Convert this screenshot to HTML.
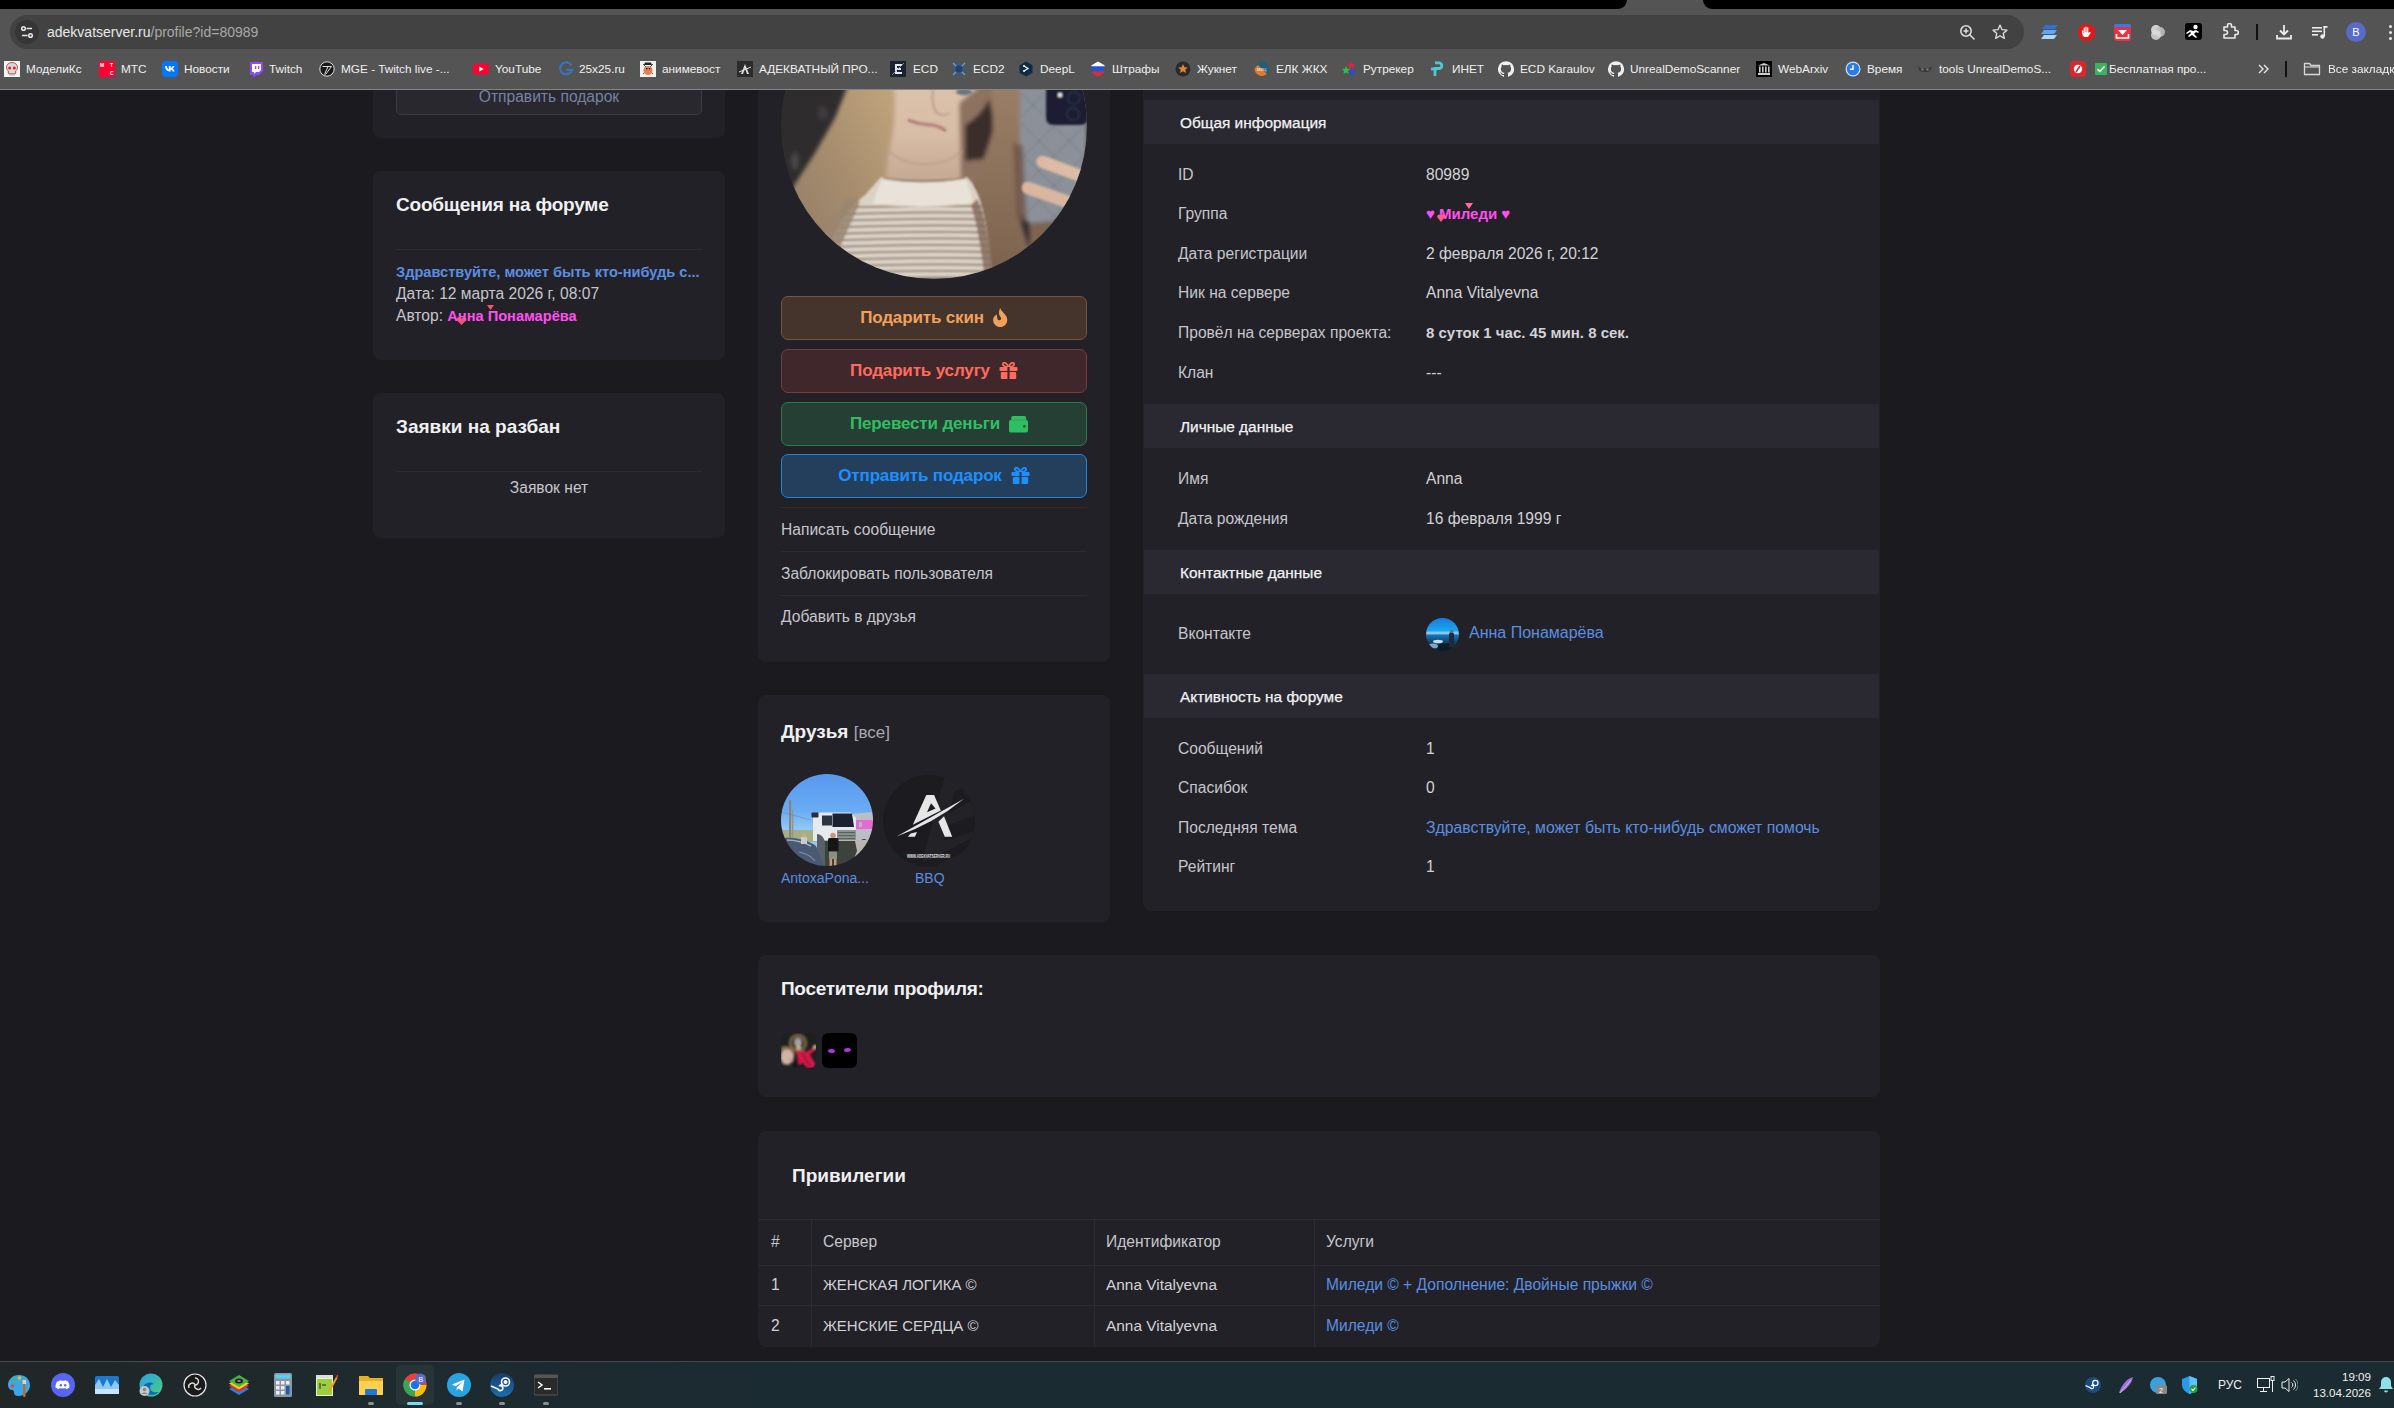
<!DOCTYPE html>
<html><head><meta charset="utf-8">
<style>
*{margin:0;padding:0;box-sizing:border-box}
html,body{width:2394px;height:1408px;overflow:hidden;background:#1b1a1f;font-family:"Liberation Sans",sans-serif}
.a{position:absolute}
.t{position:absolute;white-space:nowrap;line-height:20px}
.card{position:absolute;background:#222127;border-radius:8px}
.hr{position:absolute;height:1px;background:#2d2c33}
.lbl{color:#c6c6cc;font-size:15.6px}
.val{color:#d2d2d6;font-size:15.6px}
.ttl{color:#f0f0f2;font-size:19px;font-weight:700}
.link{color:#5b8ee0}
.pink{color:#ff4ff0;font-weight:700}
.sh{position:absolute;left:1144px;width:735px;height:44px;background:#2a2932}
.sht{position:absolute;left:36px;top:13px;line-height:20px;font-size:15.4px;color:#f2f2f4;-webkit-text-stroke:0.25px #f2f2f4;white-space:nowrap}
.btn{position:absolute;left:781px;width:306px;height:44px;border-radius:7px;border:1px solid}
.btxt{position:absolute;left:0;right:0;top:0;bottom:0;display:flex;align-items:center;justify-content:center;font-weight:700;font-size:17px;letter-spacing:-0.15px}
.bk{position:absolute;top:61px;height:16px;width:16px}
.bkt{position:absolute;top:62px;line-height:14px;font-size:11.8px;color:#f0f0f0;white-space:nowrap}
.ti{position:absolute;top:1373px;width:24px;height:24px}
</style></head><body>

<!-- ===== Page content ===== -->
<!-- Left column -->
<div class="card" style="left:373px;top:40px;width:352px;height:98px"></div>
<div class="a" style="left:396px;top:60px;width:306px;height:55px;border:1px solid #353c4a;border-radius:5px;background:#29282f"></div>
<div class="t" style="left:396px;width:306px;text-align:center;top:87px;font-size:15.6px;color:#7683a4">Отправить подарок</div>

<div class="card" style="left:373px;top:171px;width:352px;height:189px"></div>
<div class="t ttl" style="left:396px;top:195px;letter-spacing:-0.2px">Сообщения на форуме</div>
<div class="hr" style="left:396px;top:249px;width:306px"></div>
<div class="t link" style="left:396px;top:262px;font-size:14.6px;font-weight:700">Здравствуйте, может быть кто-нибудь с...</div>
<div class="t lbl" style="left:396px;top:284px">Дата: 12 марта 2026 г, 08:07</div>
<div class="t lbl" style="left:396px;top:306px">Автор: <span class="pink" style="font-size:14.6px">Анна Понамарёва</span></div>

<div class="card" style="left:373px;top:393px;width:352px;height:145px"></div>
<div class="t ttl" style="left:396px;top:417px">Заявки на разбан</div>
<div class="hr" style="left:396px;top:471px;width:306px"></div>
<div class="t lbl" style="left:396px;width:306px;text-align:center;top:478px">Заявок нет</div>

<!-- Middle column -->
<div class="card" style="left:758px;top:40px;width:352px;height:622px"></div>
<svg class="a" style="left:781px;top:-27px" width="306" height="306" viewBox="0 0 306 306">
 <defs>
  <clipPath id="av"><circle cx="153" cy="153" r="153"/></clipPath>
  <clipPath id="sw"><path d="M100 204 C130 210 165 210 186 204 C198 215 206 240 212 306 L40 306 C46 270 60 240 84 222z"/></clipPath>
  <filter id="bl" x="-10%" y="-10%" width="120%" height="120%"><feGaussianBlur stdDeviation="2.2"/></filter>
  <filter id="bl2" x="-10%" y="-10%" width="120%" height="120%"><feGaussianBlur stdDeviation="1"/></filter>
  <linearGradient id="hl" x1="1" y1="0" x2="0" y2="1"><stop offset="0" stop-color="#c6aa80"/><stop offset=".5" stop-color="#a88e6e"/><stop offset="1" stop-color="#8c7868"/></linearGradient>
  <linearGradient id="hr" x1="0" y1="0" x2="0" y2="1"><stop offset="0" stop-color="#9c8068"/><stop offset="1" stop-color="#7c624e"/></linearGradient>
  <linearGradient id="fc" x1="0" y1="0" x2="0" y2="1"><stop offset="0" stop-color="#ddc2ac"/><stop offset=".55" stop-color="#d8bda6"/><stop offset="1" stop-color="#c4a892"/></linearGradient>
 </defs>
 <g clip-path="url(#av)">
  <rect width="306" height="306" fill="#2f2c2e"/>
  <g filter="url(#bl)">
   <ellipse cx="14" cy="188" rx="4" ry="9" fill="#5a5a5c" opacity=".6"/>
   <ellipse cx="42" cy="140" rx="5" ry="7" fill="#48464a" opacity=".6"/>
   <path d="M72 100 L128 100 L120 170 L108 205 L90 222 L72 250 L58 306 L22 306 L8 250 L12 214 L34 180 L54 145z" fill="url(#hl)"/>
   <path d="M112 100 L214 100 C213 130 204 160 182 178 L182 210 L104 210 L108 180 C113 160 116 135 112 100z" fill="url(#fc)"/>
   <path d="M178 130 L214 100 L222 150 L204 214 L180 214z" fill="#8e7260"/><path d="M184 152 C194 146 202 138 208 126 L214 150 L204 186 L184 188z" fill="#3a2e2c"/>
   <path d="M211 100 L240 100 L240 250 L258 306 L195 306 L186 250 L196 205 L212 160z" fill="url(#hr)"/>
   <path d="M239 100 L306 100 L306 248 L248 250 L239 240z" fill="#8c9199"/>
   <path d="M232 170 L242 172 L246 250 L236 246z" fill="#6a4e40" opacity=".7"/>
   <path d="M248 250 L300 250 L280 306 L250 306z" fill="#7e6450"/>
  </g>
  <g filter="url(#bl2)">
   <g stroke="#6e7480" stroke-width="1" opacity=".7">
    <path d="M240 120 L306 186M240 150 L306 216M240 180 L300 240M240 210 L276 246M262 100 L306 144"/>
    <path d="M306 120 L240 186M306 150 L240 216M306 180 L246 240M306 210 L270 246M284 100 L240 144"/>
   </g>
   <rect x="265" y="100" width="42" height="52" rx="7" fill="#1b1f30"/>
   <circle cx="279" cy="122" r="2.2" fill="#f0f0f0"/>
   <circle cx="293" cy="125" r="6" fill="none" stroke="#2e3448" stroke-width="1.5"/>
   <circle cx="292" cy="141" r="6" fill="none" stroke="#2e3448" stroke-width="1.5"/>
   <path d="M262 189 L300 203" stroke="#dcbca6" stroke-width="12.5" stroke-linecap="round"/>
   <path d="M247 215 L290 230" stroke="#d8b6a0" stroke-width="12.5" stroke-linecap="round"/>
   <circle cx="260" cy="188" r="5" fill="#e4b0a4" opacity=".6"/>
   <circle cx="246" cy="214" r="5" fill="#e4b0a4" opacity=".6"/>
   <path d="M100 204 C130 210 165 210 186 204 C198 215 206 240 212 306 L40 306 C46 270 60 240 84 222z" fill="#dcd1c5"/>
   <g clip-path="url(#sw)"><g stroke="#8a7c6e" stroke-width="1.9" fill="none"><path d="M40 235.5 Q130 231.5 215 233.5"/><path d="M40 242.0 Q130 238.0 215 240.0"/><path d="M40 248.5 Q130 244.5 215 246.5"/><path d="M40 255.0 Q130 251.0 215 253.0"/><path d="M40 261.5 Q130 257.5 215 259.5"/><path d="M40 268.0 Q130 264.0 215 266.0"/><path d="M40 274.5 Q130 270.5 215 272.5"/><path d="M40 281.0 Q130 277.0 215 279.0"/><path d="M40 287.5 Q130 283.5 215 285.5"/><path d="M40 294.0 Q130 290.0 215 292.0"/><path d="M40 300.5 Q130 296.5 215 298.5"/><path d="M40 307.0 Q130 303.0 215 305.0"/></g></g>
   <path d="M102 205 Q140 212 184 205 Q190 218 192 230 Q145 237 92 231 Q96 215 102 205z" fill="#e8e2d8"/>
   <path d="M102 205 Q140 212 184 205" stroke="#8a7a6c" stroke-width="1.3" fill="none"/>
   <path d="M66 226 C74 224 80 226 78 232 C70 250 58 275 46 306 L26 306 C36 275 50 245 66 226z" fill="#9a8670" opacity=".85"/>
   <path d="M196 226 C204 240 208 270 214 306 L204 306 C200 275 196 250 190 232z" fill="#82685a" opacity=".8"/>
   <path d="M152 117 Q150 133 156 140 Q162 144 169 140" stroke="#b4948a" stroke-width="2" fill="none" opacity=".7"/>
   <path d="M127 147 Q140 152 152 152 Q160 154 165 158" stroke="#b07f7a" stroke-width="3" fill="none"/>
   <ellipse cx="183" cy="119" rx="8" ry="3.2" fill="#6c7480"/>
   <path d="M108 178 C125 195 160 196 182 178" stroke="#b89a86" stroke-width="2" fill="none" opacity=".6"/>
  </g>
 </g>
</svg>

<div class="btn" style="top:296px;background:#45342c;border-color:#7b5538"><div class="btxt" style="color:#f2a15a">Подарить скин<svg width="15" height="19" viewBox="0 0 15 19" style="margin-left:9px;margin-top:-2px"><path d="M7.3 0C7.6 3.2 14.3 6.6 14.3 12A7.1 7.1 0 0 1 0.1 12C0.1 9.6 1.6 7.6 3.7 6.6L4.4 10.8C4.7 12.6 7.4 12.9 8 11.2C8.6 9.6 6.4 8.4 6.1 6.3C5.8 4.3 6.2 1.8 7.3 0z" fill="#f2a15a"/></svg></div></div>
<div class="btn" style="top:349px;background:#40272b;border-color:#7a3b3b"><div class="btxt" style="color:#ff6b5e">Подарить услугу<svg width="19" height="17" viewBox="0 0 19 17" style="margin-left:9px;margin-top:-2px"><path d="M9.5 5C8 1 5.5 0 4.3 1.2 3 2.5 4.5 5 9.5 5zM9.5 5c1.5-4 4-5 5.2-3.8C16 2.5 14.5 5 9.5 5z" stroke="#ff6b5e" stroke-width="1.8" fill="none"/><rect x="0.5" y="5" width="18" height="4" rx="1" fill="#ff6b5e"/><rect x="1.8" y="10" width="15.4" height="7" rx="1" fill="#ff6b5e"/><rect x="8.4" y="5" width="2.2" height="12" fill="#40272b"/></svg></div></div>
<div class="btn" style="top:402px;background:#263f35;border-color:#2f7a4c"><div class="btxt" style="color:#2fbf62">Перевести деньги<svg width="19" height="17" viewBox="0 0 19 17" style="margin-left:9px;margin-right:-10px"><rect x="2.2" y="0" width="15" height="5.5" rx="2" fill="#2fbf62"/><rect x="0" y="3.8" width="19" height="12.8" rx="2.6" fill="#2fbf62"/><rect x="2.2" y="3.6" width="15" height="1" fill="#2a6a48" opacity=".35"/><rect x="14.3" y="9.2" width="2.2" height="2.2" fill="#263f35"/></svg></div></div>
<div class="btn" style="top:454px;background:#243f5c;border-color:#1f86e0"><div class="btxt" style="color:#1c90ff">Отправить подарок<svg width="19" height="17" viewBox="0 0 19 17" style="margin-left:9px;margin-top:-2px"><path d="M9.5 5C8 1 5.5 0 4.3 1.2 3 2.5 4.5 5 9.5 5zM9.5 5c1.5-4 4-5 5.2-3.8C16 2.5 14.5 5 9.5 5z" stroke="#1c90ff" stroke-width="1.8" fill="none"/><rect x="0.5" y="5" width="18" height="4" rx="1" fill="#1c90ff"/><rect x="1.8" y="10" width="15.4" height="7" rx="1" fill="#1c90ff"/><rect x="8.4" y="5" width="2.2" height="12" fill="#243f5c"/></svg></div></div>

<div class="hr" style="left:781px;top:507px;width:306px"></div>
<div class="t lbl" style="left:781px;top:520px">Написать сообщение</div>
<div class="hr" style="left:781px;top:551px;width:306px"></div>
<div class="t lbl" style="left:781px;top:564px">Заблокировать пользователя</div>
<div class="hr" style="left:781px;top:595px;width:306px"></div>
<div class="t lbl" style="left:781px;top:607px">Добавить в друзья</div>

<!-- Friends -->
<div class="card" style="left:758px;top:695px;width:352px;height:227px"></div>
<div class="t ttl" style="left:781px;top:722px">Друзья <span style="font-weight:400;color:#a9a9b2;font-size:17px">[все]</span></div>
<svg class="a" style="left:781px;top:774px" width="92" height="92" viewBox="0 0 92 92">
 <defs><clipPath id="f1"><circle cx="46" cy="46" r="46"/></clipPath><linearGradient id="sky" x1="0" y1="0" x2="0" y2="1"><stop offset="0" stop-color="#5898ee"/><stop offset=".4" stop-color="#6aacf4"/><stop offset=".6" stop-color="#94c8f6"/></linearGradient><filter id="fb"><feGaussianBlur stdDeviation="0.45"/></filter></defs>
 <g clip-path="url(#f1)" filter="url(#fb)">
  <rect width="92" height="92" fill="url(#sky)"/>
  <rect y="56" width="40" height="12" fill="#a6ae86"/>
  <rect x="8" y="26" width="2.2" height="42" fill="#8a8478"/><rect x="11" y="36" width="1.4" height="32" fill="#9a9488"/>
  <path d="M0 38L30 46" stroke="#6a7480" stroke-width=".4"/>
  <path d="M70 40L92 38V67H70z" fill="#bcbec6"/><rect x="73" y="46" width="19" height="9" rx="2" fill="#e66ad6"/><rect x="78" y="48" width="3" height="5" fill="#b8b8c0"/>
  <circle cx="83" cy="68.5" r="3.5" fill="#3a3c40"/>
  <path d="M32 40L40 38.5H70L75 44V67H32z" fill="#e6eaee"/>
  <path d="M51.5 39.5H71L73 53H51.5z" fill="#1c2230"/>
  <path d="M41 41.5H51V51.5H41z" fill="#2c3440"/>
  <rect x="30.5" y="38.5" width="7" height="5" rx="1" fill="#2a2e38"/>
  <rect x="56" y="56" width="19" height="11" fill="#8c9490"/><g fill="#5a625e"><rect x="57" y="58" width="17" height="1.2"/><rect x="57" y="61" width="17" height="1.2"/><rect x="57" y="64" width="17" height="1.2"/></g>
  <rect x="54" y="67" width="22" height="10" fill="#4c5450"/>
  <path d="M40 66h50v26H40z" fill="#b8b6ae"/><path d="M38 67h36l2 10-6 15H38z" fill="#3c423e"/>
  <path d="M36 60c4 0 8 4 8 10v22H36z" fill="#5a6068"/>
  <path d="M3 64c10-1 24 2 32 8l8 20H0z" fill="#4a5a72"/><path d="M6 66c8 0 16 2 24 6" stroke="#a0b0c8" stroke-width="1.4" fill="none"/><path d="M18 78c6 1 12 4 16 9" stroke="#8090a8" stroke-width="1.2" fill="none"/>
  <rect x="20" y="63" width="6" height="7" fill="#c8ccd0"/><circle cx="23" cy="61.5" r="2" fill="#c8a888"/>
  <circle cx="52" cy="61.5" r="2.8" fill="#c89878"/><rect x="47" y="64" width="10.5" height="13.5" rx="1.5" fill="#121212"/><rect x="48" y="77.5" width="8" height="7.5" fill="#8e9088"/><rect x="48.5" y="85" width="2.5" height="7" fill="#c89878"/><rect x="53" y="85" width="2.5" height="7" fill="#c89878"/>
 </g>
</svg>
<svg class="a" style="left:883px;top:775px" width="92" height="92" viewBox="0 0 92 92">
 <defs><clipPath id="f2"><circle cx="46" cy="46" r="46"/></clipPath><filter id="fb2"><feGaussianBlur stdDeviation="0.3"/></filter></defs>
 <g clip-path="url(#f2)">
  <rect width="92" height="92" fill="#1c1b20"/>
  <path d="M62 0L92 0L92 92L38 92z" fill="#232227"/>
  <path d="M72 16L92 8L92 24L66 38z" fill="#1c1b20"/>
  <path d="M66 50L92 40L92 56L60 66z" fill="#1c1b20"/>
  <path d="M30 92L92 62L92 72L50 92z" fill="#1c1b20"/>
  <g fill="#e6e6e6" filter="url(#fb2)">
   <path d="M43.3 19.9H51.1L57.8 35.5 29.8 49.7z"/>
   <path d="M13.5 61.4L81 23.8Q50 49 13.5 61.4z"/>
   <path d="M55.4 46.8L61 41.2 69.2 61.8H61.8z"/>
   <path d="M24.8 61.8H31.9L34 57.1 27.7 58.6z"/>
  </g>
  <path d="M48 28.2L44 37.2 52.5 33.5z" fill="#1c1b20"/>
  <text x="24" y="83.4" font-family="Liberation Sans" font-weight="700" font-size="5" fill="#e0e0e0" textLength="43" lengthAdjust="spacingAndGlyphs">WWW.ADEKVATSERVER.RU</text>
 </g>
</svg>
<div class="t link" style="left:781px;top:868px;font-size:14px">AntoxaPona...</div>
<div class="t link" style="left:915px;top:868px;font-size:14px">BBQ</div>

<!-- Right info card -->
<div class="card" style="left:1143px;top:40px;width:737px;height:871px"></div>
<div class="sh" style="top:100px"><div class="sht">Общая информация</div></div>
<div class="t lbl" style="left:1178px;top:165px">ID</div>
<div class="t val" style="left:1426px;top:165px">80989</div>
<div class="t lbl" style="left:1178px;top:204px">Группа</div>
<div class="t pink" style="left:1426px;top:204px;font-size:15px">♥ Миледи ♥</div>
<div class="t lbl" style="left:1178px;top:244px">Дата регистрации</div>
<div class="t val" style="left:1426px;top:244px">2 февраля 2026 г, 20:12</div>
<div class="t lbl" style="left:1178px;top:283px">Ник на сервере</div>
<div class="t val" style="left:1426px;top:283px">Anna Vitalyevna</div>
<div class="t lbl" style="left:1178px;top:323px">Провёл на серверах проекта:</div>
<div class="t val" style="left:1426px;top:323px;font-weight:700;font-size:15px">8 суток 1 час. 45 мин. 8 сек.</div>
<div class="t lbl" style="left:1178px;top:363px">Клан</div>
<div class="t val" style="left:1426px;top:363px">---</div>

<div class="sh" style="top:404px"><div class="sht">Личные данные</div></div>
<div class="t lbl" style="left:1178px;top:469px">Имя</div>
<div class="t val" style="left:1426px;top:469px">Anna</div>
<div class="t lbl" style="left:1178px;top:509px">Дата рождения</div>
<div class="t val" style="left:1426px;top:509px">16 февраля 1999 г</div>

<div class="sh" style="top:550px"><div class="sht">Контактные данные</div></div>
<div class="t lbl" style="left:1178px;top:624px">Вконтакте</div>
<svg class="a" style="left:1426px;top:618px" width="33" height="33" viewBox="0 0 33 33"><defs><clipPath id="vk"><circle cx="16.5" cy="16.5" r="16.5"/></clipPath><linearGradient id="vkg" x1="0" y1="0" x2="0" y2="1"><stop offset="0" stop-color="#1a7ada"/><stop offset=".38" stop-color="#18a6f0"/><stop offset=".46" stop-color="#a6d4f2"/><stop offset=".52" stop-color="#1a70b8"/><stop offset=".75" stop-color="#10405e"/><stop offset="1" stop-color="#0a2a40"/></linearGradient><filter id="vkb"><feGaussianBlur stdDeviation=".7"/></filter></defs><g clip-path="url(#vk)"><rect width="33" height="33" fill="url(#vkg)"/><g filter="url(#vkb)"><ellipse cx="12" cy="23.5" rx="5" ry="1.8" fill="#d8ecfa" opacity=".9"/><ellipse cx="7" cy="28" rx="5" ry="2.5" fill="#9cc4e0" opacity=".8"/><path d="M12 27c4-2 8-2 14-1v7H12z" fill="#0a1a28"/><path d="M25 14c2 0 3 1 3 3v12h-5V17c0-2 1-3 2-3z" fill="#1c2c3a"/><circle cx="25.8" cy="13.5" r="1.8" fill="#6a6a78"/></g></g></svg>
<div class="t link" style="left:1469px;top:623px">Анна Понамарёва</div>

<div class="sh" style="top:674px"><div class="sht">Активность на форуме</div></div>
<div class="t lbl" style="left:1178px;top:739px">Сообщений</div>
<div class="t val" style="left:1426px;top:739px">1</div>
<div class="t lbl" style="left:1178px;top:778px">Спасибок</div>
<div class="t val" style="left:1426px;top:778px">0</div>
<div class="t lbl" style="left:1178px;top:818px">Последняя тема</div>
<div class="t link" style="left:1426px;top:818px;font-size:15.8px">Здравствуйте, может быть кто-нибудь сможет помочь</div>
<div class="t lbl" style="left:1178px;top:857px">Рейтинг</div>
<div class="t val" style="left:1426px;top:857px">1</div>

<!-- Visitors -->
<div class="card" style="left:758px;top:955px;width:1122px;height:142px"></div>
<div class="t ttl" style="left:781px;top:979px;letter-spacing:-0.3px">Посетители профиля:</div>
<svg class="a" style="left:781px;top:1033px" width="35" height="35" viewBox="0 0 35 35"><defs><clipPath id="v1"><rect width="35" height="35" rx="6"/></clipPath><filter id="vb" x="-10%" y="-10%" width="120%" height="120%"><feGaussianBlur stdDeviation="0.8"/></filter></defs><g clip-path="url(#v1)"><rect width="35" height="35" fill="#1c201e"/><g filter="url(#vb)"><circle cx="17" cy="10" r="7.5" fill="none" stroke="#6e5c3e" stroke-width="4"/><ellipse cx="17" cy="9.5" rx="4" ry="4.5" fill="#a0a2a0"/><ellipse cx="17.5" cy="14.5" rx="2.6" ry="2.6" fill="#c8a898"/><path d="M15 18L24 18 29 22 34 30 34 35 26 35 22 30 18 32z" fill="#d8184a"/><path d="M24 20L33 14 34 17 27 23z" fill="#d8184a"/><circle cx="34" cy="14" r="2.2" fill="#d0a890"/><path d="M21 20L29 33" stroke="#2a1a1a" stroke-width="1"/><path d="M0 14C4 12 10 13 13 17L14 24 0 22z" fill="#8a6c4c"/><ellipse cx="6" cy="24" rx="6.5" ry="7.5" fill="#d2b4a4"/><ellipse cx="9" cy="26.5" rx="1.5" ry=".8" fill="#c07070"/><path d="M0 30C5 31 10 32 14 35H0z" fill="#193030"/><path d="M13 22L18 32 16 35 12 35z" fill="#141818"/></g></g></svg>
<div class="a" style="left:822px;top:1033px;width:35px;height:35px;border-radius:6px;background:#000"><div class="a" style="left:6px;top:15.5px;width:7px;height:4px;border-radius:50%;background:#b030e0;transform:rotate(8deg)"></div><div class="a" style="left:22px;top:15px;width:7px;height:4px;border-radius:50%;background:#b030e0;transform:rotate(-8deg)"></div></div>

<!-- Privileges -->
<div class="card" style="left:758px;top:1131px;width:1122px;height:216px;overflow:hidden">
 <div class="a" style="left:0;top:88px;width:1122px;height:1px;background:#2d2c33"></div>
 <div class="a" style="left:0;top:134px;width:1122px;height:1px;background:#2d2c33"></div>
 <div class="a" style="left:0;top:174px;width:1122px;height:1px;background:#2d2c33"></div>
 <div class="a" style="left:53px;top:88px;width:1px;height:130px;background:#2d2c33"></div>
 <div class="a" style="left:336px;top:88px;width:1px;height:130px;background:#2d2c33"></div>
 <div class="a" style="left:556px;top:88px;width:1px;height:130px;background:#2d2c33"></div>
</div>
<div class="t ttl" style="left:792px;top:1166px">Привилегии</div>
<div class="t lbl" style="left:771px;top:1232px">#</div>
<div class="t lbl" style="left:823px;top:1232px">Сервер</div>
<div class="t lbl" style="left:1106px;top:1232px">Идентификатор</div>
<div class="t lbl" style="left:1326px;top:1232px">Услуги</div>
<div class="t val" style="left:771px;top:1275px">1</div>
<div class="t val" style="left:823px;top:1275px;font-size:15px">ЖЕНСКАЯ ЛОГИКА ©</div>
<div class="t val" style="left:1106px;top:1275px;font-size:15.4px">Anna Vitalyevna</div>
<div class="t link" style="left:1326px;top:1275px;font-size:15.6px">Миледи © + Дополнение: Двойные прыжки ©</div>
<div class="t val" style="left:771px;top:1316px">2</div>
<div class="t val" style="left:823px;top:1316px;font-size:15px">ЖЕНСКИЕ СЕРДЦА ©</div>
<div class="t val" style="left:1106px;top:1316px;font-size:15.4px">Anna Vitalyevna</div>
<div class="t link" style="left:1326px;top:1316px;font-size:15.6px">Миледи ©</div>

<!-- sparkle hearts -->
<svg class="a" style="left:1465px;top:203px" width="8" height="6" viewBox="0 0 8 6"><path d="M0 0h8L4 6z" fill="#ff6aa8"/></svg>
<svg class="a" style="left:1437px;top:214px" width="8" height="8" viewBox="0 0 8 8"><path d="M4 8L0.5 3.5A2 2 0 0 1 4 1.5 2 2 0 0 1 7.5 3.5z" fill="#ff5a88"/></svg>
<svg class="a" style="left:456px;top:317px" width="11" height="8" viewBox="0 0 11 8"><path d="M5.5 8L0.5 3A2.6 2.6 0 0 1 5.5 1.8 2.6 2.6 0 0 1 10.5 3z" fill="#ff5a8a" opacity=".9"/></svg>
<svg class="a" style="left:487px;top:305px" width="7" height="5" viewBox="0 0 7 5"><path d="M0 0h7L3.5 5z" fill="#ff5070"/></svg>
<!-- ===== Browser chrome ===== -->
<div class="a" style="left:0;top:0;width:2394px;height:90px;background:#545454"></div>
<div class="a" style="left:0;top:0;width:1627px;height:9px;background:#000;border-bottom-right-radius:9px"></div>
<div class="a" style="left:1703px;top:0;width:691px;height:9px;background:#000;border-bottom-left-radius:9px"></div>
<div class="a" style="left:0;top:89px;width:2394px;height:1px;background:#858585"></div>
<!-- url pill -->
<div class="a" style="left:10px;top:15px;width:2014px;height:34px;border-radius:17px;background:#424242"></div>
<div class="a" style="left:15px;top:20px;width:24px;height:24px;border-radius:12px;background:#363636"></div>
<svg class="a" style="left:19px;top:24px" width="16" height="16" viewBox="0 0 16 16"><g stroke="#e8e8e8" stroke-width="1.5" fill="none"><circle cx="4.5" cy="4.5" r="1.8"/><line x1="7.5" y1="4.5" x2="13" y2="4.5"/><circle cx="11.5" cy="11.5" r="1.8"/><line x1="3" y1="11.5" x2="8.5" y2="11.5"/></g></svg>
<div class="t" style="left:47px;top:22px;font-size:14px;color:#e8e8e8">adekvatserver.ru<span style="color:#a9a9a9">/profile?id=80989</span></div>
<!-- zoom + star -->
<svg class="a" style="left:1959px;top:24px" width="18" height="18" viewBox="0 0 18 18"><g stroke="#dcdcdc" stroke-width="1.6" fill="none"><circle cx="7" cy="7" r="5.2"/><line x1="10.8" y1="10.8" x2="15.5" y2="15.5"/><line x1="4.5" y1="7" x2="9.5" y2="7"/><line x1="7" y1="4.5" x2="7" y2="9.5"/></g></svg>
<svg class="a" style="left:1991px;top:23px" width="18" height="18" viewBox="0 0 24 24"><path d="M12 2.8l2.7 6.1 6.6.6-5 4.4 1.5 6.5L12 17l-5.8 3.4 1.5-6.5-5-4.4 6.6-.6z" stroke="#dcdcdc" stroke-width="1.8" fill="none" stroke-linejoin="round"/></svg>
<!-- extensions -->
<svg class="a" style="left:2041px;top:24px" width="18" height="16" viewBox="0 0 18 16"><path d="M4 1h13l-3 4H1z" fill="#2f6fd6"/><path d="M3 6h13l-3 4H0z" fill="#5fa8f0"/><path d="M3 11h13l-3 4H0z" fill="#a8d8ff"/></svg>
<svg class="a" style="left:2078px;top:24px" width="17" height="17" viewBox="0 0 17 17"><path d="M5 0h7l5 5v7l-5 5H5l-5-5V5z" fill="#e01a1a"/><path d="M6 13c-1-1-2-3-2-5V6.5h1.2V9h.5V3.8h1.2V8h.5V2.8h1.2V8h.5V3.5h1.2V9l1.5-1.3 1 .8L10 13z" fill="#fff"/></svg>
<svg class="a" style="left:2114px;top:24px" width="17" height="17" viewBox="0 0 17 17"><rect x="0" y="0" width="17" height="17" rx="3" fill="#e8323e"/><rect x="0" y="0" width="17" height="3" rx="2" fill="#2d7cf6"/><path d="M4 6h9l-4.5 5z" fill="#fff"/><path d="M2.5 10v4h12v-4" stroke="#fff" stroke-width="1.6" fill="none"/></svg>
<svg class="a" style="left:2149px;top:23px" width="18" height="18" viewBox="0 0 18 18"><circle cx="7" cy="7" r="5" fill="#cfcfcf"/><circle cx="11" cy="9" r="5" fill="#bdbdbd" opacity=".9"/><circle cx="7" cy="12" r="5" fill="#e0e0e0" opacity=".8"/></svg>
<svg class="a" style="left:2185px;top:23px" width="17" height="17" viewBox="0 0 17 17"><rect width="17" height="17" rx="3" fill="#000"/><circle cx="10.5" cy="4" r="2.2" fill="#fff"/><path d="M1 10l4-3 3 1 3-1 3 2-1 1-2-1-2 2 3 3-1 1-4-3-3 2-1-1 3-3-1-1-3 2z" fill="#fff"/></svg>
<svg class="a" style="left:2221px;top:23px" width="18" height="18" viewBox="0 0 18 18"><path d="M3 4h3.5V2.5a2 2 0 0 1 4 0V4H14v3.5h1.3a2 2 0 0 1 0 4H14V15H3v-3.5h1.5a2 2 0 0 0 0-4H3z" stroke="#e8e8e8" stroke-width="1.6" fill="none" stroke-linejoin="round"/></svg>
<div class="a" style="left:2256px;top:24px;width:2px;height:16px;background:#111"></div>
<svg class="a" style="left:2275px;top:23px" width="18" height="18" viewBox="0 0 18 18"><g stroke="#ececec" stroke-width="1.8" fill="none"><line x1="9" y1="2" x2="9" y2="11"/><polyline points="5,7.5 9,11.5 13,7.5"/><polyline points="2,12 2,15.5 16,15.5 16,12"/></g></svg>
<svg class="a" style="left:2311px;top:23px" width="18" height="18" viewBox="0 0 18 18"><g fill="#ececec"><rect x="1" y="4" width="10" height="1.6"/><rect x="1" y="7.5" width="10" height="1.6"/><rect x="1" y="11" width="6" height="1.6"/><rect x="12.5" y="3" width="1.6" height="10"/><rect x="12.5" y="3" width="4" height="1.8"/><circle cx="11.5" cy="13.5" r="2.2"/></g></svg>
<div class="a" style="left:2346px;top:22px;width:20px;height:20px;border-radius:10px;background:#5a6bc7;color:#fff;font-size:11px;line-height:20px;text-align:center">B</div>
<div class="a" style="left:2389px;top:25px;width:3px;height:3px;border-radius:2px;background:#e8e8e8"></div>
<div class="a" style="left:2389px;top:31px;width:3px;height:3px;border-radius:2px;background:#e8e8e8"></div>
<div class="a" style="left:2389px;top:37px;width:3px;height:3px;border-radius:2px;background:#e8e8e8"></div>

<!-- bookmarks -->
<div class="bk" style="left:4px;background:#f4f4f4"><svg width="16" height="16" viewBox="0 0 16 16"><path d="M8 1.5c3.3 0 5.5 2.2 5.5 5 0 1.7-.8 2.8-1.8 3.5v2.5H4.3V10C3.3 9.3 2.5 8.2 2.5 6.5c0-2.8 2.2-5 5.5-5z" fill="#d9d9d9" stroke="#b03030" stroke-width=".8"/><circle cx="5.7" cy="7" r="1.5" fill="#e02020"/><circle cx="10.3" cy="7" r="1.5" fill="#e02020"/><rect x="5" y="12.5" width="6" height="2" fill="#bbb"/></svg></div>
<div class="bkt" style="left:26px">МоделиКс</div>
<div class="bk" style="left:99px;background:#ff0032;color:#fff;font-size:5px;font-weight:700;line-height:6px"><span class="a" style="left:1px;top:1px">M</span><span class="a" style="left:11px;top:1px">T</span><span class="a" style="left:11px;top:9px">C</span></div>
<div class="bkt" style="left:121px">МТС</div>
<div class="bk" style="left:162px;background:#0077ff;border-radius:4px"><svg width="16" height="16" viewBox="0 0 16 16"><path d="M3 5h2c.1 2.3 1 3.4 1.8 3.6V5h1.9v2c.8-.1 1.6-1 1.9-2h1.8c-.3 1.3-1.2 2.3-1.9 2.7.7.3 1.7 1.2 2.1 2.8h-2c-.3-1-1.1-1.8-2-1.9v1.9H8.4C5 10.5 3.1 8.3 3 5z" fill="#fff"/></svg></div>
<div class="bkt" style="left:184px">Новости</div>
<svg class="bk" style="left:248px" viewBox="0 0 16 16"><path d="M2 1h13v9l-4 4H8l-2 2H5v-2H2z" fill="#9146ff"/><path d="M4 3h9v6l-2 2H8l-2 2v-2H4z" fill="#fff"/><rect x="7" y="5" width="1.3" height="3" fill="#9146ff"/><rect x="10" y="5" width="1.3" height="3" fill="#9146ff"/></svg>
<div class="bkt" style="left:269px">Twitch</div>
<svg class="bk" style="left:319px" viewBox="0 0 16 16"><circle cx="8" cy="8" r="7.2" fill="#1a1a1a" stroke="#ddd" stroke-width="1"/><path d="M3.5 5.5h9L6.5 13.5M9 5.5l-3.5 8" stroke="#ddd" stroke-width="1" fill="none"/></svg>
<div class="bkt" style="left:341px">MGE - Twitch live -...</div>
<svg class="bk" style="left:473px" viewBox="0 0 16 16"><rect x="0" y="2.5" width="16" height="11" rx="3" fill="#ff0033"/><path d="M6.3 5.5v5l4.3-2.5z" fill="#fff"/></svg>
<div class="bkt" style="left:495px">YouTube</div>
<svg class="bk" style="left:558px" viewBox="0 0 16 16"><path d="M13.5 4.5A6 6 0 1 0 14 9H8.5" stroke="#3a72b8" stroke-width="2.4" fill="none"/></svg>
<div class="bkt" style="left:579px">25x25.ru</div>
<div class="bk" style="left:640px;background:#f2f2f2"><svg width="16" height="16" viewBox="0 0 16 16"><path d="M3 3l10 10M13 3L3 13" stroke="#555" stroke-width="1"/><path d="M4 4h8l-1-2.5H5z" fill="#222"/><circle cx="8" cy="9.5" r="4.5" fill="#e8804a"/><rect x="6" y="7" width="1.4" height="1.4" fill="#222"/><rect x="8.8" y="7" width="1.4" height="1.4" fill="#222"/></svg></div>
<div class="bkt" style="left:662px">анимевост</div>
<div class="bk" style="left:737px;background:#2b2b2b"><svg width="16" height="16" viewBox="0 0 16 16"><path d="M8 3l4 10h-2L8 7.5 6 13H4z" fill="#ddd"/><path d="M2 11l12-5" stroke="#ddd" stroke-width="1"/></svg></div>
<div class="bkt" style="left:759px">АДЕКВАТНЫЙ ПРО...</div>
<div class="bk" style="left:890px;background:#1e2230"><svg width="16" height="16" viewBox="0 0 16 16"><path d="M5 3h7v2H7v2h4v2H7v2h5v2H5z" fill="#e8e8e8"/><path d="M2 14L14 2" stroke="#9ab" stroke-width=".8"/></svg></div>
<div class="bkt" style="left:913px">ECD</div>
<svg class="bk" style="left:951px" viewBox="0 0 16 16"><circle cx="8" cy="8" r="6" fill="#3a5a8a"/><circle cx="8" cy="8" r="3.5" fill="#27426a"/><path d="M2 2l3 3M14 2l-3 3M2 14l3-3M14 14l-3-3" stroke="#6ab" stroke-width="1.2"/></svg>
<div class="bkt" style="left:973px">ECD2</div>
<svg class="bk" style="left:1018px" viewBox="0 0 16 16"><path d="M8 0.5l6.5 3.8v7.4L8 15.5 1.5 11.7V4.3z" fill="#0f2b46"/><path d="M6 5l4 2.5L6 10" stroke="#fff" stroke-width="1.2" fill="none"/><circle cx="6" cy="5" r="1" fill="#fff"/><circle cx="6" cy="10" r="1" fill="#fff"/></svg>
<div class="bkt" style="left:1040px">DeepL</div>
<svg class="bk" style="left:1090px" viewBox="0 0 16 16"><defs><clipPath id="hx"><path d="M8 0.5l6.5 3.8v7.4L8 15.5 1.5 11.7V4.3z"/></clipPath></defs><g clip-path="url(#hx)"><rect width="16" height="5.5" fill="#fff"/><rect y="5.5" width="16" height="5" fill="#1c57d4"/><rect y="10.5" width="16" height="6" fill="#e02a3a"/></g></svg>
<div class="bkt" style="left:1112px">Штрафы</div>
<svg class="bk" style="left:1175px" viewBox="0 0 16 16"><circle cx="8" cy="8" r="7.5" fill="#2a2a2a"/><path d="M8 3l1.4 3.2 3.4.3-2.6 2.2.8 3.4L8 10.3 5 12.1l.8-3.4-2.6-2.2 3.4-.3z" fill="#e0883a"/></svg>
<div class="bkt" style="left:1197px">Жукнет</div>
<svg class="bk" style="left:1254px" viewBox="0 0 16 16"><circle cx="8" cy="8" r="7.5" fill="#1f5f7a"/><path d="M0.5 8A7.5 7.5 0 0 0 13 13L4 4A7.5 7.5 0 0 0 .5 8z" fill="#e8782a"/><text x="3" y="9.5" font-size="4" fill="#fff" font-family="Liberation Sans">МФЦ</text></svg>
<div class="bkt" style="left:1276px">ЕЛК ЖКХ</div>
<svg class="bk" style="left:1341px" viewBox="0 0 16 16"><path d="M10 0l1.2 2.8 3 .2-2.3 2 .7 3L10 6.5 7.4 8l.7-3-2.3-2 3-.2z" fill="#e0204a"/><path d="M5 5l1.2 2.8 3 .2-2.3 2 .7 3L5 11.5 2.4 13l.7-3L.8 8l3-.2z" fill="#2ac04a"/><path d="M11 7l1.2 2.8 3 .2-2.3 2 .7 3L11 13.5 8.4 15l.7-3-2.3-2 3-.2z" fill="#2a4ad8"/></svg>
<div class="bkt" style="left:1363px">Рутрекер</div>
<svg class="bk" style="left:1430px" viewBox="0 0 16 16"><path d="M5 15V7.5h4a2.8 2.8 0 0 0 0-5.6H5" stroke="#4acbd6" stroke-width="2.8" fill="none"/><path d="M1 8h6" stroke="#4acbd6" stroke-width="2.8"/></svg>
<div class="bkt" style="left:1452px">ИНЕТ</div>
<svg class="bk" style="left:1498px" viewBox="0 0 16 16"><path d="M8 .2a8 8 0 0 0-2.5 15.6c.4.1.5-.2.5-.4v-1.4c-2.2.5-2.7-1-2.7-1-.4-.9-.9-1.2-.9-1.2-.7-.5.1-.5.1-.5.8.1 1.2.8 1.2.8.7 1.2 1.9.9 2.3.7.1-.5.3-.9.5-1.1-1.8-.2-3.6-.9-3.6-4 0-.9.3-1.6.8-2.1-.1-.2-.4-1 .1-2.1 0 0 .7-.2 2.2.8a7.6 7.6 0 0 1 4 0c1.5-1 2.2-.8 2.2-.8.4 1.1.2 1.9.1 2.1.5.6.8 1.3.8 2.1 0 3.1-1.9 3.8-3.6 4 .3.3.5.8.5 1.5v2.2c0 .2.1.5.6.4A8 8 0 0 0 8 .2z" fill="#f0f0f0"/></svg>
<div class="bkt" style="left:1520px">ECD Karaulov</div>
<svg class="bk" style="left:1608px" viewBox="0 0 16 16"><path d="M8 .2a8 8 0 0 0-2.5 15.6c.4.1.5-.2.5-.4v-1.4c-2.2.5-2.7-1-2.7-1-.4-.9-.9-1.2-.9-1.2-.7-.5.1-.5.1-.5.8.1 1.2.8 1.2.8.7 1.2 1.9.9 2.3.7.1-.5.3-.9.5-1.1-1.8-.2-3.6-.9-3.6-4 0-.9.3-1.6.8-2.1-.1-.2-.4-1 .1-2.1 0 0 .7-.2 2.2.8a7.6 7.6 0 0 1 4 0c1.5-1 2.2-.8 2.2-.8.4 1.1.2 1.9.1 2.1.5.6.8 1.3.8 2.1 0 3.1-1.9 3.8-3.6 4 .3.3.5.8.5 1.5v2.2c0 .2.1.5.6.4A8 8 0 0 0 8 .2z" fill="#f0f0f0"/></svg>
<div class="bkt" style="left:1630px">UnrealDemoScanner</div>
<div class="bk" style="left:1756px;background:#000"><svg width="16" height="16" viewBox="0 0 16 16"><path d="M8 2l6 2.5H2z" fill="#ccc"/><rect x="3" y="5.5" width="1.6" height="6" fill="#ccc"/><rect x="6" y="5.5" width="1.6" height="6" fill="#ccc"/><rect x="9" y="5.5" width="1.6" height="6" fill="#ccc"/><rect x="12" y="5.5" width="1.6" height="6" fill="#ccc"/><rect x="2" y="12" width="12" height="2" fill="#ccc"/></svg></div>
<div class="bkt" style="left:1778px">WebArxiv</div>
<svg class="bk" style="left:1845px" viewBox="0 0 16 16"><circle cx="8" cy="8" r="7.5" fill="#cfe3ff"/><circle cx="8" cy="8" r="6.3" fill="#2a7de8"/><path d="M8 4v4.3H5" stroke="#fff" stroke-width="1.4" fill="none"/></svg>
<div class="bkt" style="left:1867px">Время</div>
<svg class="bk" style="left:1917px" viewBox="0 0 16 16"><path d="M1 5l3 2h8l3-2-1 4-3 2H5L2 9z" fill="#3a3a3a"/><circle cx="5.5" cy="8.5" r="1.3" fill="#777"/><circle cx="10.5" cy="8.5" r="1.3" fill="#777"/></svg>
<div class="bkt" style="left:1939px">tools UnrealDemoS...</div>
<svg class="bk" style="left:2070px" viewBox="0 0 16 16"><rect width="16" height="16" rx="3.5" fill="#d8282e"/><circle cx="8" cy="8" r="4.2" fill="#fff"/><path d="M6 11l4-6" stroke="#d8282e" stroke-width="1.6"/></svg>
<svg class="bk" style="left:2095px;top:63px;width:12px;height:12px" viewBox="0 0 12 12"><rect width="12" height="12" rx="1" fill="#3cb55a"/><path d="M2.5 6.2l2.3 2.3L9.5 3.5" stroke="#fff" stroke-width="1.5" fill="none"/></svg>
<div class="bkt" style="left:2109px">Бесплатная про...</div>
<svg class="a" style="left:2257px;top:62px" width="14" height="14" viewBox="0 0 14 14"><path d="M2 3l4 4-4 4M7 3l4 4-4 4" stroke="#e6e6e6" stroke-width="1.4" fill="none"/></svg>
<div class="a" style="left:2285px;top:61px;width:2px;height:16px;background:#111"></div>
<svg class="a" style="left:2303px;top:61px" width="18" height="16" viewBox="0 0 18 16"><path d="M1.5 2.5h5l1.5 2h8.5v9h-15z" stroke="#d8d8d8" stroke-width="1.3" fill="none" stroke-linejoin="round"/><line x1="1.5" y1="6" x2="16.5" y2="6" stroke="#d8d8d8" stroke-width="1.1"/></svg>
<div class="bkt" style="left:2328px">Все закладки</div>

<!-- ===== Taskbar ===== -->
<div class="a" style="left:0;top:1361px;width:2394px;height:47px;background:linear-gradient(90deg,#212627 0%,#1e2a2e 15%,#1a2b32 35%,#1a2b32 100%)"></div>
<div class="a" style="left:0;top:1361px;width:2394px;height:1px;background:linear-gradient(90deg,#474c4d,#3d4b50 30%,#3d4b50)"></div>
<div class="a" style="left:396px;top:1365px;width:38px;height:40px;border-radius:5px;background:#273438"></div>
<!-- paint -->
<svg class="ti" style="left:7px" viewBox="0 0 24 24"><path d="M12 2C5 2 1 7 1 12c0 3 2 5 4 5 2 0 2 2 2 3 0 2 2 3 4 3 7 0 12-5 12-11S18 2 12 2z" fill="#3aa8e8"/><circle cx="5.5" cy="13" r="1.8" fill="#e84a2a"/><circle cx="8" cy="7" r="1.8" fill="#4ab84a"/><circle cx="12.5" cy="5" r="1.8" fill="#f0c020"/><rect x="16" y="8" width="2.6" height="16" rx="1" fill="#b07030"/><rect x="15.5" y="7" width="3.6" height="4" fill="#e8d0a0"/></svg>
<!-- discord -->
<svg class="ti" style="left:51px" viewBox="0 0 24 24"><circle cx="12" cy="12" r="12" fill="#5865f2"/><path d="M7 8.5c1.5-1 3-1.3 3-1.3l.3.6c1.1-.2 2.3-.2 3.4 0l.3-.6s1.5.3 3 1.3c1 1.8 1.6 3.8 1.5 6-1.2.9-2.4 1.4-3.4 1.7l-.7-1.1c.5-.2 1-.4 1.4-.7-2.8 1.3-5.8 1.3-8.6 0 .4.3.9.5 1.4.7l-.7 1.1c-1-.3-2.2-.8-3.4-1.7-.1-2.2.5-4.2 1.5-6z" fill="#fff"/><ellipse cx="9.8" cy="12.2" rx="1.2" ry="1.3" fill="#5865f2"/><ellipse cx="14.2" cy="12.2" rx="1.2" ry="1.3" fill="#5865f2"/></svg>
<!-- task manager -->
<svg class="ti" style="left:95px" viewBox="0 0 24 24"><rect x="0" y="3" width="24" height="18" rx="1.5" fill="#1b78d0"/><path d="M0 12l4-6 4 8 4-8 4 8 4-7 4 5v9H0z" fill="#8ccaf4"/><path d="M0 16h24v5H0z" fill="#c6e6fa"/></svg>
<!-- edge -->
<svg class="ti" style="left:139px" viewBox="0 0 24 24"><defs><linearGradient id="eg" x1="0" y1="0" x2="1" y2="1"><stop offset="0" stop-color="#2aa0e8"/><stop offset="1" stop-color="#4ad07a"/></linearGradient></defs><circle cx="12" cy="12" r="11.5" fill="url(#eg)"/><path d="M3 16c2 6 12 8 17 3-4 1-9 0-9-5 0-2 2-3 4-3-3-3-10-2-12 5z" fill="#1066c0"/><circle cx="5.5" cy="18" r="5" fill="#c8c8c8"/><circle cx="5.5" cy="16.5" r="1.8" fill="#888"/><path d="M2.5 21c1-2 5-2 6 0" fill="#888"/></svg>
<!-- obs -->
<svg class="ti" style="left:183px" viewBox="0 0 24 24"><circle cx="12" cy="12" r="11" fill="#1a1a1a" stroke="#e8e8e8" stroke-width="1.2"/><g fill="none" stroke="#ddd" stroke-width="1.4"><path d="M12 5a3.5 3.5 0 0 1 0 7"/><path d="M6 15a3.5 3.5 0 0 1 6-3.5"/><path d="M18 15a3.5 3.5 0 0 1-6-3.5"/></g></svg>
<!-- bluestacks -->
<svg class="ti" style="left:227px" viewBox="0 0 24 24"><path d="M2 16l10-6 10 6-10 6z" fill="#2a80e0"/><path d="M2 13l10-6 10 6-10 6z" fill="#e82a2a"/><path d="M2 10.5l10-6 10 6-10 6z" fill="#f0d020"/><path d="M2 8l10-6 10 6-10 6z" fill="#40b840"/><ellipse cx="12" cy="8" rx="4" ry="2.5" fill="#222"/><ellipse cx="12" cy="8" rx="1.8" ry="1" fill="#e060b0"/></svg>
<!-- calc -->
<svg class="ti" style="left:271px" viewBox="0 0 24 24"><rect x="3" y="0" width="18" height="24" rx="1.5" fill="#8a96a6"/><rect x="4.5" y="1.5" width="15" height="4" fill="#5ad0f0"/><g fill="#e8eef4"><rect x="5" y="8" width="3.5" height="3.5"/><rect x="10" y="8" width="3.5" height="3.5"/><rect x="15" y="8" width="3.5" height="3.5"/><rect x="5" y="13" width="3.5" height="3.5"/><rect x="10" y="13" width="3.5" height="3.5"/><rect x="5" y="18" width="3.5" height="3.5"/><rect x="10" y="18" width="3.5" height="3.5"/></g><rect x="15" y="13" width="3.5" height="8.5" fill="#1e5aa8"/></svg>
<!-- notepad++ -->
<svg class="ti" style="left:314px" viewBox="0 0 24 24"><rect x="2" y="2" width="17" height="21" fill="#eaf0d8"/><rect x="2" y="2" width="17" height="3" fill="#ddd"/><rect x="3" y="6" width="15" height="16" fill="#9ad040"/><path d="M6 10v6M8 12h4" stroke="#222" stroke-width="1"/><path d="M14 18L22 4l1.5 1L16 19z" fill="#f0a020"/><path d="M22 4l1-2.5 1.5 1-1 2.5z" fill="#e04030"/></svg>
<!-- explorer -->
<svg class="ti" style="left:359px" viewBox="0 0 24 24"><path d="M0 3h9l2 2h13v17H0z" fill="#e8b020"/><path d="M0 8h24v14H0z" fill="#ffd050"/><rect x="6" y="16" width="12" height="6" rx="1" fill="#1e78d8"/></svg>
<!-- chrome -->
<svg class="ti" style="left:403px" viewBox="0 0 24 24"><circle cx="12" cy="12" r="11.5" fill="#e94235"/><path d="M12 12L1.9 6.2A11.5 11.5 0 0 0 12 23.5z" fill="#34a853"/><path d="M12 12h11.5A11.5 11.5 0 0 1 12 23.5z" fill="#fbbc04"/><path d="M12 12L6.3 2A11.5 11.5 0 0 1 23.5 12z" fill="#e94235"/><circle cx="12" cy="12" r="5.5" fill="#fff"/><circle cx="12" cy="12" r="4.3" fill="#1a73e8"/><circle cx="17.5" cy="6" r="5.5" fill="#5a6bc7"/><text x="15.6" y="8.6" font-size="7" fill="#fff" font-family="Liberation Sans">B</text></svg>
<!-- telegram -->
<svg class="ti" style="left:447px" viewBox="0 0 24 24"><circle cx="12" cy="12" r="12" fill="#2aa3e0"/><path d="M5 11.5l12.5-5-2 12-4-3-2 2 .3-3.2 6-5.5-7.5 4.5z" fill="#fff"/></svg>
<!-- steam -->
<svg class="ti" style="left:490px" viewBox="0 0 24 24"><defs><linearGradient id="stg" x1="0" y1="0" x2="0" y2="1"><stop offset="0" stop-color="#1a3a6a"/><stop offset="1" stop-color="#1a70b0"/></linearGradient></defs><circle cx="12" cy="12" r="12" fill="url(#stg)"/><circle cx="15.5" cy="9" r="4" fill="none" stroke="#fff" stroke-width="1.6"/><circle cx="15.5" cy="9" r="2" fill="#fff"/><path d="M1 13l7 3a2.5 2.5 0 1 0 1-3l4-2" stroke="#fff" stroke-width="1.6" fill="none"/></svg>
<!-- terminal -->
<svg class="ti" style="left:534px" viewBox="0 0 24 24"><rect x="0" y="2" width="24" height="20" rx="1.5" fill="#2a2a2a" stroke="#666" stroke-width=".8"/><rect x="0" y="2" width="24" height="3" fill="#555"/><path d="M4 9l4 3-4 3" stroke="#fff" stroke-width="1.5" fill="none"/><rect x="10" y="15" width="7" height="1.6" fill="#fff"/></svg>
<!-- indicators -->
<div class="a" style="left:368px;top:1402px;width:6px;height:3px;border-radius:2px;background:#8a9090"></div>
<div class="a" style="left:407px;top:1402px;width:16px;height:3px;border-radius:2px;background:#7fd8e8"></div>
<div class="a" style="left:456px;top:1402px;width:6px;height:3px;border-radius:2px;background:#8a9090"></div>
<div class="a" style="left:499px;top:1402px;width:6px;height:3px;border-radius:2px;background:#8a9090"></div>
<div class="a" style="left:543px;top:1402px;width:6px;height:3px;border-radius:2px;background:#8a9090"></div>
<!-- tray -->
<svg class="a" style="left:2085px;top:1377px" width="16" height="16" viewBox="0 0 24 24"><circle cx="12" cy="12" r="12" fill="#1a4a80"/><circle cx="15.5" cy="9" r="4" fill="none" stroke="#fff" stroke-width="1.8"/><path d="M1 13l7 3a2.5 2.5 0 1 0 1-3l4-2" stroke="#fff" stroke-width="1.8" fill="none"/></svg>
<svg class="a" style="left:2118px;top:1376px" width="16" height="18" viewBox="0 0 16 18"><path d="M1 17C3 10 8 3 15 1c-1 6-6 12-13 16z" fill="#a070d8"/><path d="M2 17L13 4" stroke="#e0c8ff" stroke-width=".8"/></svg>
<svg class="a" style="left:2150px;top:1377px" width="17" height="17" viewBox="0 0 17 17"><circle cx="8" cy="8" r="8" fill="#3aa0e0"/><rect x="6" y="8" width="11" height="9" rx="1.5" fill="#888"/><text x="9" y="15.5" font-size="7" fill="#fff" font-family="Liberation Sans">2</text></svg>
<svg class="a" style="left:2182px;top:1376px" width="17" height="18" viewBox="0 0 17 18"><path d="M7.5 0L15 3v6c0 4-3 7-7.5 9C3 16 0 13 0 9V3z" fill="#2a9ae8"/><path d="M7.5 0L15 3v6c0 4-3 7-7.5 9z" fill="#60c0f8"/><circle cx="11.5" cy="13" r="4" fill="#22a040"/><path d="M9.5 13l1.5 1.5 2.5-3" stroke="#fff" stroke-width="1.1" fill="none"/></svg>
<div class="t" style="left:2218px;top:1375px;font-size:12px;color:#f0f0f0;line-height:20px">РУС</div>
<svg class="a" style="left:2257px;top:1376px" width="18" height="17" viewBox="0 0 18 17"><g stroke="#f0f0f0" stroke-width="1" fill="none"><rect x="0.5" y="2.5" width="12" height="9"/><line x1="6.5" y1="11.5" x2="6.5" y2="15"/><line x1="3" y1="15.5" x2="10" y2="15.5"/><rect x="14" y="0.5" width="3" height="4"/><line x1="15.5" y1="4.5" x2="15.5" y2="16"/></g></svg>
<svg class="a" style="left:2281px;top:1377px" width="17" height="16" viewBox="0 0 17 16"><g stroke="#f0f0f0" stroke-width="1" fill="none"><path d="M1 5h3l4-3.5v13L4 11H1z"/><path d="M10.5 5.5a3 3 0 0 1 0 5"/><path d="M12.5 3.5a6 6 0 0 1 0 9"/><path d="M14.5 2a8 8 0 0 1 0 12" stroke="#888"/></g></svg>
<div class="t" style="left:2301px;top:1369px;width:70px;text-align:right;font-size:11.6px;color:#f0f0f0;line-height:16px">19:09<br>13.04.2026</div>
<svg class="a" style="left:2378px;top:1376px" width="16" height="17" viewBox="0 0 16 17"><path d="M8 1a5 5 0 0 1 5 5v4l2 3H1l2-3V6a5 5 0 0 1 5-5z" fill="#8ee0e8"/><path d="M6 14.5a2 2 0 0 0 4 0z" fill="#8ee0e8"/></svg>

</body></html>
